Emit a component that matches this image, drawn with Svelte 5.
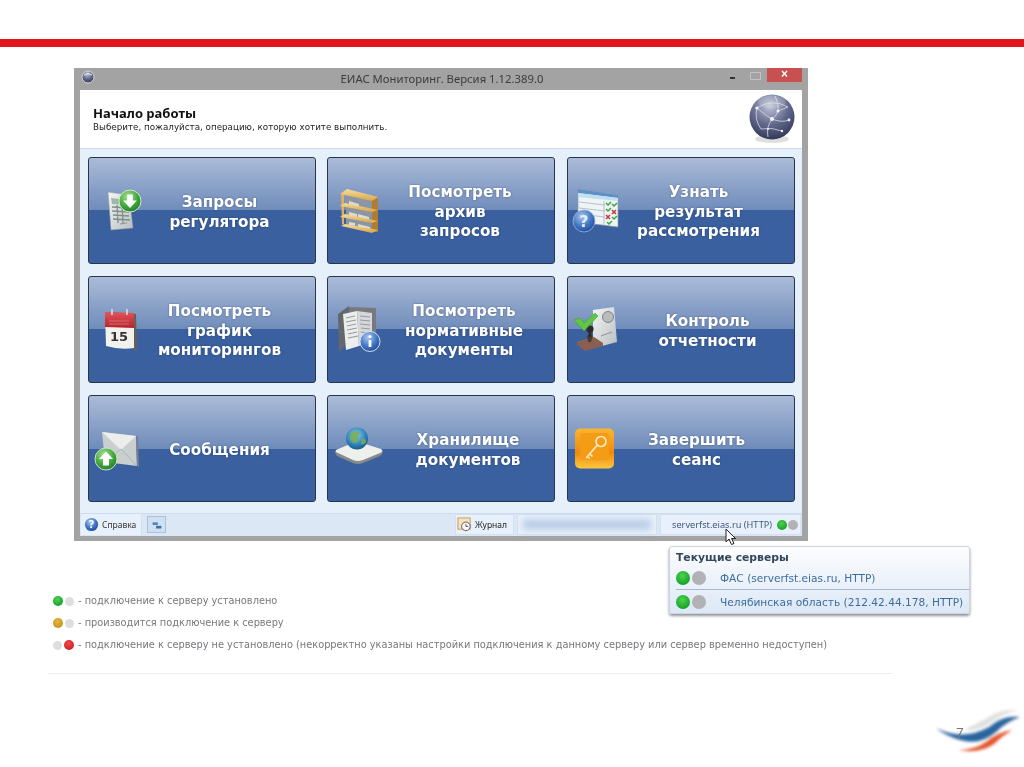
<script>
  // pad = left padding of a button, it moves the centred caption off the icon
  const buttons = [
    { icon: "requests", pad: 36, lines: ["Запросы", "регулятора"] },
    { icon: "shelf", pad: 38, lines: ["Посмотреть", "архив", "запросов"] },
    { icon: "result", pad: 36, lines: ["Узнать", "результат", "рассмотрения"] },
    { icon: "calendar", pad: 36, lines: ["Посмотреть", "график", "мониторингов"] },
    { icon: "book", pad: 46, lines: ["Посмотреть", "нормативные", "документы"] },
    { icon: "stamp", pad: 54, lines: ["Контроль", "отчетности"] },
    { icon: "mail", pad: 36, lines: ["Сообщения"] },
    { icon: "drive", pad: 54, lines: ["Хранилище", "документов"] },
    { icon: "key", pad: 32, lines: ["Завершить", "сеанс"] }
  ];

  const legend = [
    { a: "green", b: "off", text: "- подключение к серверу установлено" },
    { a: "amber", b: "off", text: "- производится подключение к серверу" },
    { a: "off", b: "red", text: "- подключение к серверу не установлено (некорректно указаны настройки подключения к данному серверу или сервер временно недоступен)" }
  ];

  const servers = ["ФАС (serverfst.eias.ru, HTTP)", "Челябинская область (212.42.44.178, HTTP)"];
</script>

<svg class="defs" width="0" height="0" aria-hidden="true">
  <defs>
    <radialGradient id="gGreen" cx="40%" cy="30%" r="75%">
      <stop offset="0" stop-color="#a6e08c" /><stop offset="0.6" stop-color="#3fa83c" /><stop offset="1" stop-color="#1d7a2a" />
    </radialGradient>
    <radialGradient id="gBlue" cx="40%" cy="30%" r="75%">
      <stop offset="0" stop-color="#a9c8ef" /><stop offset="0.6" stop-color="#3f74c4" /><stop offset="1" stop-color="#1f4a96" />
    </radialGradient>
    <radialGradient id="gGlobe" cx="45%" cy="25%" r="80%">
      <stop offset="0" stop-color="#c4c8d8" /><stop offset="0.5" stop-color="#656c90" /><stop offset="1" stop-color="#2c3150" />
    </radialGradient>
    <radialGradient id="gEarth" cx="45%" cy="35%" r="70%">
      <stop offset="0" stop-color="#8fd0ee" /><stop offset="0.6" stop-color="#2f86bf" /><stop offset="1" stop-color="#14517f" />
    </radialGradient>
    <linearGradient id="gWood" x1="0" y1="0" x2="0" y2="1">
      <stop offset="0" stop-color="#f6dc9c" /><stop offset="1" stop-color="#d9a54a" />
    </linearGradient>
    <linearGradient id="gSheet" x1="0" y1="0" x2="1" y2="1">
      <stop offset="0" stop-color="#f5f6f4" /><stop offset="1" stop-color="#b9bfc2" />
    </linearGradient>
    <linearGradient id="gKey" x1="0" y1="0" x2="0" y2="1">
      <stop offset="0" stop-color="#f9b62e" /><stop offset="0.6" stop-color="#f08a0c" /><stop offset="1" stop-color="#fbc73c" />
    </linearGradient>
    <linearGradient id="gCal" x1="0" y1="0" x2="0" y2="1">
      <stop offset="0" stop-color="#e2555a" /><stop offset="1" stop-color="#b7222b" />
    </linearGradient>
  </defs>
</svg>

{#snippet icon(name)}
  <svg class="btn-icon" viewBox="0 0 68 68" width="68" height="68" aria-hidden="true">
    {#if name === "requests"}
      <path d="M16 15 L37 18 L41 51 L19 53 Z" fill="url(#gSheet)" stroke="#8d9a94" stroke-width=".5" />
      <path d="M19 21 L35 23 L36 28 L20 27 Z" fill="#9fb9a8" />
      <path d="M20 30 L36 31 M20 34 L37 35 M21 38 L37 39 M21 42 L38 43 M25 28 L26 46 M30 28 L31 46" stroke="#7e8f88" stroke-width="1.3" fill="none" />
      <path d="M28 47 L35 46" stroke="#8b9692" stroke-width="1.2" />
      <circle cx="38" cy="24" r="11" fill="url(#gGreen)" stroke="#d7e6cf" stroke-width="1" />
      <path d="M35.2 17.5 h5.6 v6 h4 L38 31 L31.2 23.5 h4 Z" fill="#fff" />
    {:else if name === "shelf"}
      <path d="M15 16 L41 23 L41 54 L15 48 Z" fill="#8b96a2" />
      <path d="M18 24 L28 27 V32 L18 29 Z M18 35 L26 37 V43 L18 41 Z M27 37 L38 40 V45 L27 43 Z M18 45 L24 46 V49 L18 48 Z M27 47 L39 50 V54 L27 51 Z" fill="#dcdcd6" />
      <path d="M10 17 L13 15 L13 48 L11 47 Z" fill="#e0b060" />
      <path d="M41 23 L47 21 L47 55 L41 55 Z" fill="#b07c2e" />
      <path d="M9 17 L16 12 L47 20 L41 24 Z" fill="url(#gWood)" />
      <path d="M9 29 L14 26 L47 33 L41 35 Z" fill="url(#gWood)" />
      <path d="M9 40 L14 37 L47 44 L41 46 Z" fill="url(#gWood)" />
      <path d="M10 49 L14 47 L47 53 L41 56 Z" fill="url(#gWood)" />
    {:else if name === "result"}
      <path d="M7 12 L47 18 L47 50 L7 45 Z" fill="#eef3f6" stroke="#8c99a6" stroke-width=".7" />
      <path d="M7 12 L47 18 L47 21 L7 16 Z" fill="#5e8fc5" />
      <path d="M7 16 L47 21 L47 24 L7 20 Z" fill="#bfe0f2" />
      <path d="M8 25 L34 28 M8 31 L34 34 M8 37 L34 40 M33 24 V48" stroke="#aab4bd" stroke-width=".8" />
      <path d="M35 26 l2 2 l3 -3 M41 27 l2 2 l3 -3 M35 32 l2 2 l3 -3" stroke="#3da53d" stroke-width="1.5" fill="none" />
      <path d="M41 33 l4 4 m0 -4 l-4 4 M35 38 l4 4 m0 -4 l-4 4" stroke="#c9343b" stroke-width="1.5" fill="none" />
      <path d="M41 40 l2 2 l3 -3 M36 45 l2 2 l3 -3" stroke="#3da53d" stroke-width="1.5" fill="none" />
      <circle cx="13" cy="44" r="11" fill="url(#gBlue)" stroke="#9eb8da" stroke-width=".8" />
      <text x="13" y="50" class="glyph" font-size="16" text-anchor="middle" fill="#e6eefa">?</text>
    {:else if name === "calendar"}
      <path d="M17 16 L44 18 L45 54 L42 54 L41 20 Z" fill="#6a5f55" />
      <path d="M13 17 L42 17 L42 52 Q28 54 14 50 Z" fill="#f3f1ee" />
      <path d="M13 16 L42 17 L42 32 L13 31 Z" fill="url(#gCal)" />
      <path d="M20 13 v6 M35 13 v6" stroke="#d9d9d9" stroke-width="1.6" />
      <path d="M17 25 h20 M17 28 h20" stroke="#d56b70" stroke-width="1" />
      <text x="27" y="45" class="glyph" font-size="13" text-anchor="middle" fill="#333">15</text>
    {:else if name === "book"}
      <path d="M7 18 L18 10 L18 46 L8 56 Z" fill="#64676b" />
      <path d="M18 11 L45 12 L45 44 L18 46 Z" fill="#77797d" />
      <path d="M12 18 L26 15 L28 50 L15 54 Z" fill="#eceeee" />
      <path d="M26 15 L41 17 L41 46 L28 50 Z" fill="#d5d8da" />
      <path d="M15 22 L24 20 M15 26 L25 24 M16 30 L25 28 M16 34 L26 32 M17 38 L26 36 M17 42 L27 40 M29 20 L39 21 M29 24 L39 25 M29 28 L39 29 M30 32 L39 33 M30 36 L38 37" stroke="#999" stroke-width="1.2" />
      <circle cx="39" cy="45.5" r="10" fill="url(#gBlue)" stroke="#d5dff0" stroke-width="1" />
      <circle cx="39" cy="40.5" r="1.6" fill="#fff" />
      <path d="M37.6 44 h2.8 v7 h-2.8 Z" fill="#fff" />
    {:else if name === "stamp"}
      <path d="M22 14 L43 11 L46 46 L31 50 L22 48 Z" fill="url(#gSheet)" />
      <circle cx="37" cy="21" r="5.5" fill="#b8bcbc" stroke="#7e8282" stroke-width="1" />
      <path d="M30 40 L41 36" stroke="#8e9291" stroke-width="1" />
      <path d="M7 46 L24 41 L33 48 L15 54 Z" fill="#e8dccb" />
      <path d="M6 46 L23 41 L32 47 L32 50 L14 55 L6 49 Z" fill="#8a5f52" />
      <path d="M16 40 Q19 37 22 40 L20 46 L17 46 Z" fill="#4a3a33" />
      <circle cx="19" cy="33" r="3.6" fill="#2e2a2a" />
      <path d="M17.5 35 h3 v6 h-3 Z" fill="#2e2a2a" />
      <path d="M3 24 L9 22 L13 27 L24 17 L27 20 L13 35 Z" fill="#5fc842" stroke="#3b9a30" stroke-width=".5" />
    {:else if name === "mail"}
      <path d="M10 17 L44 21 L45 51 L13 47 Z" fill="#c9cfce" />
      <path d="M10 17 L44 21 L29 35 Z" fill="#eceeec" />
      <path d="M13 47 L29 34 L45 51" fill="none" stroke="#aeb4b4" stroke-width="1" />
      <path d="M44 21 L46 21 L47 52 L45 51 Z" fill="#6f7e93" />
      <circle cx="14" cy="44" r="11" fill="url(#gGreen)" stroke="#cfe2c9" stroke-width="1" />
      <path d="M14 36.5 L21 44 h-4 v6.5 h-6 V44 h-4 Z" fill="#fff" />
    {:else if name === "drive"}
      <path d="M4 36 Q4 40 8 42 L22 48 Q27 50 32 48 L49 41 Q52 39 52 36 Z" fill="#878c8a" />
      <path d="M5 35 Q4 37 7 38 L22 45 Q27 47 32 45 L49 38 Q53 36 50 34 L31 28 Q25 27 19 29 Z" fill="#eef0ec" />
      <circle cx="26" cy="23.5" r="11" fill="url(#gEarth)" />
      <path d="M20 18 Q25 14 29 18 Q26 22 28 26 Q23 30 20 26 Q18 22 20 18 Z M31 24 Q35 23 35 27 Q32 31 30 29 Z" fill="#79ad52" opacity=".85" />
    {:else if name === "key"}
      <rect x="4" y="13.5" width="39" height="40" rx="5" fill="url(#gKey)" />
      <rect x="9" y="18" width="29" height="27" rx="3" fill="#f59c17" />
      <circle cx="30" cy="26.5" r="5" fill="none" stroke="#ffeac0" stroke-width="1.7" />
      <path d="M26.5 30 L15 43 M19 39 l2.5 2.5 M16.5 41.5 l2 2" stroke="#ffeac0" stroke-width="1.7" fill="none" />
    {/if}
  </svg>
{/snippet}

<div class="slide">
  <div class="redbar"></div>

  <div class="window">
    <div class="titlebar">
      <svg class="app-icon" viewBox="0 0 14 14" width="14" height="14" aria-hidden="true">
        <circle cx="7" cy="7" r="6" fill="url(#gGlobe)" stroke="#d6d6da" stroke-width="1" />
        <path d="M3 5 Q7 2 11 5" stroke="#e8e8ee" stroke-width="1" fill="none" />
      </svg>
      <span class="title">ЕИАС Мониторинг. Версия 1.12.389.0</span>
      <div class="controls">
        <span class="min"></span>
        <span class="max"></span>
        <span class="close">×</span>
      </div>
    </div>

    <div class="inner">
      <header class="head">
        <div>
          <h1>Начало работы</h1>
          <p>Выберите, пожалуйста, операцию, которую хотите выполнить.</p>
        </div>
        <svg class="globe" viewBox="0 0 48 52" width="48" height="52" aria-hidden="true">
          <ellipse cx="24" cy="46" rx="17" ry="4" fill="#c9c9c9" opacity=".6" />
          <circle cx="24" cy="24" r="22.5" fill="url(#gGlobe)" />
          <path d="M9 15 Q24 5 40 14 M9 15 Q20 24 24 26 Q34 30 41 27 M27 3 Q31 12 30 18 Q28 24 24 26 Q18 34 20 44 M9 15 Q6 26 13 36 Q24 34 34 38 M30 18 L40 14" stroke="#d9dce8" stroke-width=".8" fill="none" />
          <g fill="#f4f5fa">
            <circle cx="9" cy="15" r="1.6" /><circle cx="30" cy="18" r="1.5" /><circle cx="24" cy="26" r="2" /><circle cx="41" cy="27" r="1.4" /><circle cx="34" cy="38" r="1.2" /><circle cx="20" cy="36" r="1" />
          </g>
          <ellipse cx="24" cy="9" rx="14" ry="6.5" fill="#fff" opacity=".14" />
        </svg>
      </header>

      <div class="grid">
        {#each buttons as b}
          <div class="btn" style:padding-left="{b.pad}px">
            {@render icon(b.icon)}
            <div class="label">
              {#each b.lines as line}<div>{line}</div>{/each}
            </div>
          </div>
        {/each}
      </div>

      <footer class="status">
        <div class="cell help">
          <svg viewBox="0 0 16 16" width="15" height="15" aria-hidden="true">
            <circle cx="8" cy="8" r="7" fill="url(#gBlue)" />
            <text x="8" y="12" class="glyph" font-size="11" text-anchor="middle" fill="#fff">?</text>
          </svg>
          <span>Справка</span>
        </div>
        <div class="mini">
          <svg viewBox="0 0 16 16" width="14" height="14" aria-hidden="true">
            <path d="M3 5 h6 v3 H3 Z" fill="#4e86ad" /><path d="M7 9 h6 v3 H7 Z" fill="#3a6f98" />
          </svg>
        </div>
        <div class="spacer"></div>
        <div class="cell journal">
          <svg viewBox="0 0 16 16" width="15" height="15" aria-hidden="true">
            <rect x="1" y="1" width="13" height="12" fill="#f3e3c2" stroke="#c99b4c" />
            <circle cx="9.5" cy="10" r="4.6" fill="#f6f6f6" stroke="#555" />
            <path d="M9.5 7.5 V10 H12" stroke="#555" fill="none" />
          </svg>
          <span>Журнал</span>
        </div>
        <div class="cell masked"><div class="smear"></div></div>
        <div class="cell server">
          <span>serverfst.eias.ru (HTTP)</span>
          <span class="dots small"><i class="dot green"></i><i class="dot grey"></i></span>
        </div>
      </footer>
    </div>
  </div>

  <ul class="legend">
    {#each legend as row}
      <li>
        <span class="dots"><i class="dot {row.a}"></i><i class="dot {row.b}"></i></span>
        <span>{row.text}</span>
      </li>
    {/each}
  </ul>

  <div class="rule"></div>

  <svg class="cursor" viewBox="0 0 12 18" width="12" height="18" aria-hidden="true">
    <path d="M1 1 L1 14 L4 11 L6.5 16.5 L9 15.5 L6.5 10.5 L10.5 10.5 Z" fill="#fff" stroke="#222" stroke-width="1" />
  </svg>

  <div class="popup">
    <div class="popup-title">Текущие серверы</div>
    {#each servers as s, i}
      <div class="popup-row" class:first={i === 0}>
        <span class="dots big"><i class="dot green"></i><i class="dot grey"></i></span>
        <span>{s}</span>
      </div>
    {/each}
  </div>

  <svg class="logo" viewBox="0 0 90 50" width="90" height="50" aria-hidden="true">
    <path d="M30 24 Q50 14 60 8 Q72 3 84 4 Q68 8 58 16 Q44 26 30 24 Z" fill="#dfe1de" />
    <path d="M2 22 Q18 30 34 28 Q50 26 62 16 Q72 10 86 11 Q72 16 62 26 Q46 40 26 34 Q12 30 2 22 Z" fill="#2a659f" />
    <path d="M24 44 Q40 44 52 36 Q64 26 78 24 Q68 30 60 38 Q46 48 24 44 Z" fill="#e4552c" />
  </svg>
  <span class="page">7</span>
</div>

<style>
  :global(body) {
    margin: 0;
    background: #fff;
  }

  .defs {
    position: absolute;
  }

  .slide {
    position: relative;
    width: 1024px;
    height: 767px;
    overflow: hidden;
    padding-top: 39px;
    box-sizing: border-box;
    background: #fff;
    font-family: "DejaVu Sans", sans-serif;
    filter: blur(0.35px);
  }

  .redbar {
    height: 8px;
    background: #e2141b;
  }

  .window {
    box-sizing: border-box;
    width: 734px;
    height: 473px;
    margin: 21px 0 0 74px;
    padding: 0 6px 5px;
    background: #a3a3a3;
    display: flex;
    flex-direction: column;
  }

  .titlebar {
    position: relative;
    flex: 0 0 22px;
    display: flex;
    align-items: center;
    justify-content: center;
    font-family: "Noto Sans", sans-serif;
    font-size: 11.3px;
    color: #3c3c3c;
  }

  .title {
    margin-bottom: 1px;
    margin-left: 2px;
    white-space: nowrap;
  }

  .app-icon {
    position: absolute;
    left: 1px;
    top: 2px;
  }

  .controls {
    position: absolute;
    right: 0;
    top: 0;
    display: flex;
    align-items: flex-start;
  }

  .min {
    width: 5px;
    height: 2px;
    margin: 9px 15px 0 0;
    background: #333;
  }

  .max {
    width: 9px;
    height: 6px;
    margin: 4px 6px 0 0;
    border: 1px solid #c2c2c2;
  }

  .close {
    width: 35px;
    height: 14px;
    background: #c75050;
    color: #fff;
    font: bold 12px/13px "Liberation Sans", sans-serif;
    text-align: center;
  }

  .inner {
    flex: 1;
    display: flex;
    flex-direction: column;
    min-height: 0;
    background: #e6f0fb;
  }

  .head {
    box-sizing: border-box;
    height: 59px;
    padding: 3px 6px 0 13px;
    display: flex;
    justify-content: space-between;
    align-items: flex-start;
    background: #fff;
    border-bottom: 1px solid #cfdcea;
  }

  .head > div {
    padding-top: 13px;
  }

  h1 {
    margin: 0;
    font-family: "Noto Sans", sans-serif;
    font-size: 13px;
    line-height: 15px;
    font-weight: bold;
    color: #111;
  }

  .head p {
    margin: 0;
    font: 8.75px/12px "DejaVu Sans", sans-serif;
    color: #222;
  }

  .grid {
    flex: 1;
    display: grid;
    grid-template-columns: repeat(3, 228px);
    grid-template-rows: repeat(3, 107px);
    column-gap: 11.5px;
    row-gap: 12px;
    padding: 8px 0 0 7.5px;
    align-content: start;
  }

  .btn {
    position: relative;
    box-sizing: border-box;
    display: flex;
    align-items: center;
    justify-content: center;
    border: 1px solid #28364c;
    border-radius: 3px;
    background: linear-gradient(#abbbd8 0, #6f8cba 50%, #3a609f 50%, #3a609f 100%);
  }

  .btn-icon {
    position: absolute;
    left: 3px;
    top: 18.5px;
  }

  .label {
    margin-top: 4px;
    text-align: center;
    color: #fff;
    font-size: 15.2px;
    line-height: 19.5px;
    font-weight: bold;
    text-shadow: 0 0 2px rgba(20, 40, 80, 0.55);
  }

  .status {
    flex: 0 0 23px;
    display: flex;
    align-items: stretch;
    gap: 3px;
    padding: 0 1px 1px;
    box-sizing: border-box;
    background: #dbe7f5;
    border-top: 1px solid #cddbec;
    font-family: "Noto Sans", sans-serif;
    font-size: 8.5px;
    color: #333;
  }

  .cell {
    display: flex;
    align-items: center;
    gap: 3px;
    box-sizing: border-box;
    background: #e8f1fb;
    border: 1px solid #d3e0ef;
  }

  .help {
    width: 61px;
    padding-left: 3px;
    margin-right: 2px;
    border-width: 0 1px 0 0;
  }

  .mini {
    width: 17px;
    margin: 2px 0;
    display: flex;
    align-items: center;
    justify-content: center;
    background: #cfe0f2;
    border: 1px solid #a9c3de;
  }

  .spacer {
    flex: 1;
  }

  .journal {
    width: 59px;
    padding-left: 1px;
    color: #222;
  }

  .masked {
    width: 140px;
    padding: 0 5px;
  }

  .smear {
    flex: 1;
    height: 11px;
    background: #bccfe8;
    filter: blur(3px);
  }

  .server {
    width: 141px;
    padding: 0 2px 0 11px;
    justify-content: space-between;
    color: #41597c;
    font-size: 9.2px;
  }

  .dots {
    display: inline-flex;
    align-items: center;
    gap: 2px;
    flex: none;
  }

  .dot {
    width: 10px;
    height: 10px;
    border-radius: 50%;
    display: block;
  }

  .big .dot {
    width: 14px;
    height: 14px;
  }

  .small .dot {
    width: 10px;
    height: 10px;
    margin-left: -1px;
  }

  .green { background: radial-gradient(circle at 45% 35%, #4ed44e, #14a02a 75%); }
  .grey { background: #b2b2b6; }
  .off { background: #dedede; width: 9px; height: 9px; }
  .amber { background: radial-gradient(circle at 45% 35%, #e3b93d, #c6921e 75%); }
  .red { background: radial-gradient(circle at 45% 35%, #ee4a4a, #cf1f25 75%); }

  .legend {
    list-style: none;
    margin: 54px 0 0 53px;
    padding: 0;
    display: flex;
    flex-direction: column;
    gap: 10px;
    font-size: 9.8px;
    line-height: 12px;
    color: #77787c;
  }

  .legend li {
    display: flex;
    align-items: center;
    gap: 4px;
    white-space: nowrap;
  }

  .rule {
    height: 1px;
    margin: 22px 131px 0 48px;
    background: #eeeeee;
  }

  .cursor {
    position: absolute;
    left: 725px;
    top: 528px;
  }

  .popup {
    position: absolute;
    left: 669px;
    top: 546px;
    box-sizing: border-box;
    width: 301px;
    height: 68px;
    padding: 4px 0 0 6px;
    background: linear-gradient(#fdfdfe, #dce8f6);
    border: 1px solid #d0d4da;
    border-radius: 3px;
    box-shadow: 0 2px 3px #8d939b;
    color: #3d6c9f;
  }

  .popup-title {
    font-size: 10.8px;
    line-height: 14px;
    font-weight: bold;
    color: #33475f;
  }

  .popup-row {
    display: flex;
    align-items: center;
    gap: 14px;
    height: 24px;
    white-space: nowrap;
    font-size: 10.6px;
    border-top: 1px solid #a9b9cb;
    margin-right: -1px;
  }

  .popup-row.first {
    border-top: none;
    height: 23px;
    margin-top: 1px;
  }

  .logo {
    position: absolute;
    left: 934px;
    top: 706px;
    filter: blur(1.4px);
  }

  .page {
    position: absolute;
    left: 956px;
    top: 725px;
    font: 14px/16px "Liberation Sans", sans-serif;
    color: #777;
  }

  .glyph {
    font-family: "DejaVu Sans", sans-serif;
    font-weight: bold;
  }
</style>
